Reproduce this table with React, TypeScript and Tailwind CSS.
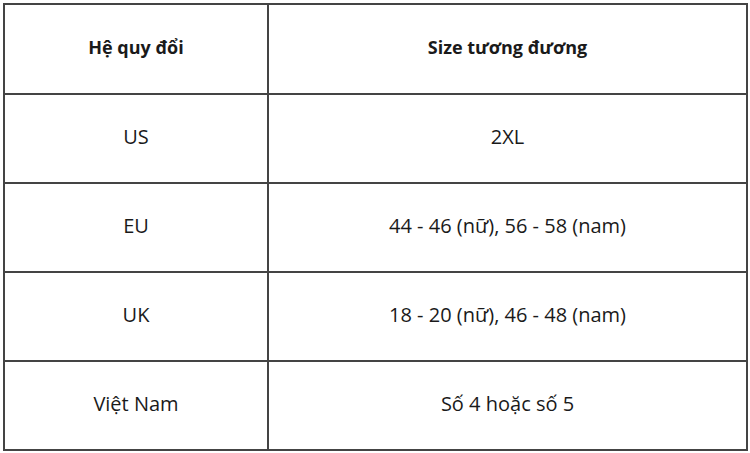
const rows: [string, string][] = [
  ["US", "2XL"],
  ["EU", "44 - 46 (nữ), 56 - 58 (nam)"],
  ["UK", "18 - 20 (nữ), 46 - 48 (nam)"],
  ["Việt Nam", "Số 4 hoặc số 5"],
];

export default function App() {
  return (
    <div className="w-[750px] h-[453px] bg-white pl-[3px] pt-[3px] font-['Open_Sans','Noto_Sans',sans-serif] text-[20px] text-[#1a1a1a]">
      <table className="w-[745px] border-collapse table-fixed">
        <colgroup>
          <col className="w-[264px]" />
          <col />
        </colgroup>
        <thead>
          <tr className="h-[90px] text-[18px]">
            <th className="border-2 border-[#444] font-bold text-center pb-[4px]">Hệ quy đổi</th>
            <th className="border-2 border-[#444] font-bold text-center pb-[4px]">Size tương đương</th>
          </tr>
        </thead>
        <tbody>
          {rows.map(([sys, size]) => (
            <tr key={sys} className="h-[89px]">
              <td className="border-2 border-[#444] text-center pb-[4px]">{sys}</td>
              <td className="border-2 border-[#444] text-center pb-[4px]">{size}</td>
            </tr>
          ))}
        </tbody>
      </table>
    </div>
  );
}
